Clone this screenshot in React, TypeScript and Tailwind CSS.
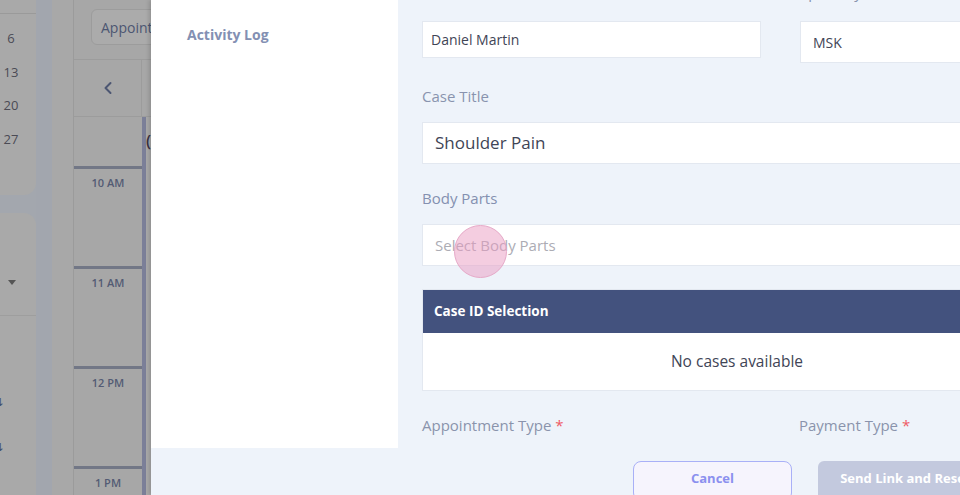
import { ChevronLeft } from 'lucide-react'

const TimeSlot = ({ label }: { label: string }) => (
  <div className="h-[100px] shrink-0 border-t-[3px] border-[#727786] pt-[6px] text-center text-[11px] font-semibold text-[#535b74]">
    {label}
  </div>
)

const Backdrop = () => {
  return (
    <div className="flex h-full">
      {/* mini calendar + filters column */}
      <div className="flex w-[36px] shrink-0 flex-col bg-[#a3a7ae]">
        <div className="h-[195px] shrink-0 rounded-br-[12px] bg-[#a9a9a9]">
          <div className="h-[14px] border-b border-[#9a9a9a]" />
          <div className="flex flex-col items-center gap-[14px] pt-[15px] pr-[14px] text-[13px] text-[#4b4b55]">
            <span>6</span>
            <span>13</span>
            <span>20</span>
            <span>27</span>
          </div>
        </div>
        <div className="mt-[18px] flex-1 rounded-tr-[12px] bg-[#a9a9a9]">
          <div className="flex h-[102px] items-end pb-[30px] pl-[8px]">
            <span className="h-0 w-0 border-x-[4px] border-t-[5px] border-x-transparent border-t-[#555]" />
          </div>
          <div className="border-t border-[#9e9e9e]" />
          <div className="pt-[80px] text-[11px] leading-none text-[#40506e]">
            <div className="-ml-[6px]">⇅</div>
            <div className="-ml-[6px] mt-[34px]">⇅</div>
          </div>
        </div>
      </div>
      <div className="w-[16px] shrink-0 bg-[#a2a6ae]" />
      <div className="w-[21px] shrink-0 bg-[#a8a8a8]" />
      {/* day view */}
      <div className="flex w-[78px] shrink-0 flex-col overflow-hidden border-l border-[#9b9b9b] bg-[#a7a7a7]">
        <div className="h-[60px] shrink-0 border-b border-[#9c9c9c] pl-[17px] pt-[9px]">
          <div className="flex h-[36px] w-[110px] items-center rounded-md border border-[#9c9c9c] bg-[#ababab] pl-[9px] text-[14px] text-[#4c5672]">
            Appointments
          </div>
        </div>
        <div className="flex h-[57px] shrink-0 border-b border-[#9c9c9c]">
          <div className="flex w-[68px] items-center justify-center text-[#4c5672]">
            <ChevronLeft size={20} strokeWidth={2.4} />
          </div>
          <div className="w-[10px] border-l border-[#9c9c9c]" />
        </div>
        <div className="flex flex-1">
          <div className="flex w-[68px] shrink-0 flex-col">
            <div className="h-[49px] shrink-0" />
            <TimeSlot label="10 AM" />
            <TimeSlot label="11 AM" />
            <TimeSlot label="12 PM" />
            <TimeSlot label="1 PM" />
          </div>
          <div className="w-[4px] shrink-0 bg-[#7b7f98]" />
          <div className="flex-1 bg-[#a9a9a9] pt-[12px] text-[16px] font-semibold text-[#3c3242]">(</div>
        </div>
      </div>
    </div>
  )
}

const Field = ({ label, value, className = '' }: { label: string; value: string; className?: string }) => (
  <div className="flex flex-col">
    <div className="h-[20px] text-[15px] leading-[20px] text-[#8993ae]">{label}</div>
    <div className={`mt-[19px] flex items-center border border-[#e3e8f0] bg-white text-[#3f4556] ${className}`}>
      {value}
    </div>
  </div>
)

export default function App() {
  return (
    <div className="relative h-[495px] w-[960px] overflow-hidden bg-[#a6a6a6] font-['Open_Sans',sans-serif]">
      <Backdrop />

      {/* modal */}
      <div className="absolute left-[151px] top-0 flex h-[495px] w-[920px] flex-col bg-[#eef3fa] shadow-[-2px_0_4px_rgba(0,0,0,0.15)]">
        <div className="flex h-[448px] shrink-0">
          <aside className="w-[247px] shrink-0 bg-white pl-[36px] pt-[24px]">
            <p className="text-[14px] font-bold text-[#8390b3]">Activity Log</p>
          </aside>

          <section className="relative min-w-0 flex-1 pl-[24px]">
            <div className="-mt-[18px] grid w-[716px] grid-cols-2 gap-x-[40px]">
              <Field label="Patient Name" value="Daniel Martin" className="h-[37px] w-[339px] px-[8px] text-[14px]" />
              <Field label="Specialty" value="MSK" className="h-[42px] px-[12px] text-[14px]" />
            </div>

            <div className="mt-[23px] flex flex-col">
              <div className="h-[20px] text-[15px] leading-[20px] text-[#8993ae]">Case Title</div>
              <div className="mt-[16px] flex h-[42px] items-center border border-[#e3e8f0] bg-white px-[12px] text-[17px] text-[#3f4556]">
                Shoulder Pain
              </div>
            </div>

            <div className="mt-[24px] flex flex-col">
              <div className="h-[20px] text-[15px] font-medium leading-[20px] text-[#8490b0]">Body Parts</div>
              <div className="mt-[16px] flex h-[42px] items-center border border-[#e3e8f0] bg-white px-[12px] text-[15px] text-[#acacb4]">
                Select Body Parts
              </div>
            </div>

            <div className="mt-[23px] w-[630px] border border-[#e3e8f0] bg-white">
              <div className="flex h-[43px] items-center bg-[#43527e] px-[11px] text-[13.5px] font-bold text-white">
                Case ID Selection
              </div>
              <div className="flex h-[57px] items-center justify-center text-[15.5px] text-[#3f4556]">
                No cases available
              </div>
            </div>

            <div className="mt-[24px] grid w-[716px] grid-cols-2 gap-x-[40px] text-[15px] leading-[20px] text-[#8a93ac]">
              <div>
                Appointment Type <span className="text-[#ef5a64]">*</span>
              </div>
              <div className="-ml-[1px]">
                Payment Type <span className="text-[#ef5a64]">*</span>
              </div>
            </div>

            {/* touch indicator */}
            <span className="absolute left-[56px] top-[225px] h-[53px] w-[53px] rounded-full border border-[#e6a9c8] bg-[#e99bc2]/50" />
          </section>
        </div>

        <footer className="flex shrink-0 gap-[26px] pl-[482px] pt-[13px]">
          <button className="h-[40px] w-[159px] shrink-0 rounded-lg border-[1.5px] border-[#a9b0f7] bg-[#f6f4fd] pb-[4px] text-[13px] font-bold text-[#8b90ef]">
            Cancel
          </button>
          <button className="h-[40px] w-[190px] shrink-0 rounded-md bg-[#c3c9de] pb-[4px] text-[13px] font-bold text-white">
            Send Link and Reserve
          </button>
        </footer>
      </div>
    </div>
  )
}
